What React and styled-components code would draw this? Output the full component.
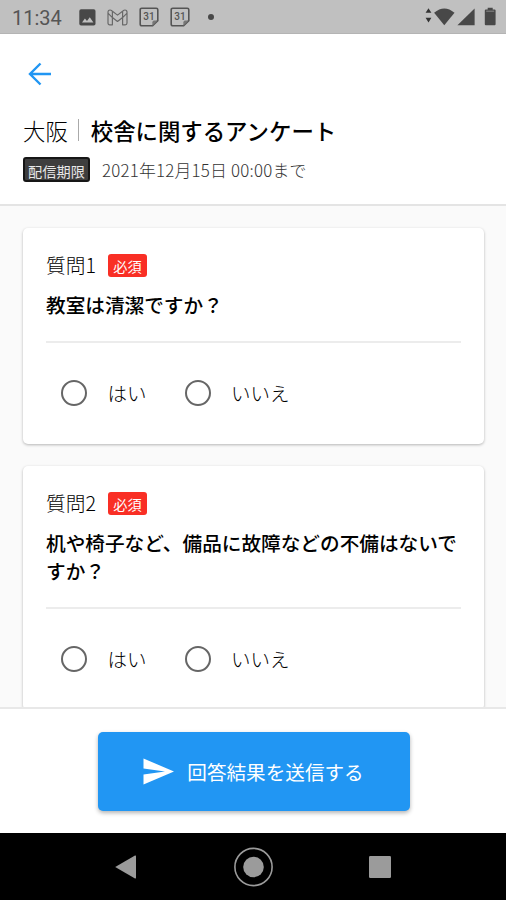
import styled, { createGlobalStyle } from "styled-components";

const questions = [
  { id: 1, title: "教室は清潔ですか？" },
  { id: 2, title: "机や椅子など、備品に故障などの不備はないですか？" },
];

function CalendarIcon() {
  return (
    <Icon width="20" height="20" viewBox="0 0 20 20">
      <path
        d="M2.8 1.2h14.4q1.6 0 1.6 1.6v10.8l-5.2 5.2H2.8q-1.6 0-1.6-1.6V2.8q0-1.6 1.6-1.6z"
        fill="none"
        stroke="#555"
        strokeWidth="1.6"
      />
      <path d="M13.4 18.8v-3.6q0-1.6 1.6-1.6h3.6z" fill="#777" />
      <text
        x="10"
        y="13"
        textAnchor="middle"
        fontFamily="Roboto, sans-serif"
        fontSize="10"
        fontWeight="500"
        fill="#555"
      >
        31
      </text>
    </Icon>
  );
}

function StatusBar() {
  return (
    <Status>
      <Clock>11:34</Clock>
      <Notifications>
        <Icon width="17" height="17" viewBox="0 0 17 17">
          <rect x="0.3" y="0.3" width="16.2" height="16.2" rx="1.8" fill="#484848" />
          <path d="M3 13.4l2.9-3.9 2.1 2.4 2.8-3.7 3.6 5.2z" fill="#c0c0c0" />
        </Icon>
        <Icon width="21" height="17" viewBox="0 0 21 17">
          <path
            d="M1 3.2Q1 1 3 1q1 0 1.8.7l5.7 4.4 5.7-4.4Q17 1 18 1q2 0 2 2.2V14q0 1.8-1.8 1.8h-2.6V8.6l-5.1 3.9-5.1-3.9v7.2H2.8Q1 15.8 1 14zM5.4 8.6V2.4M15.6 8.6V2.4M1.2 4.4l4.2 4.2M19.8 4.4l-4.2 4.2"
            fill="none"
            stroke="#686868"
            strokeWidth="1.2"
            strokeLinejoin="round"
          />
        </Icon>
        <CalendarIcon />
        <CalendarIcon />
        <Dot />
      </Notifications>
      <Icon width="71" height="20" viewBox="0 0 71 20">
        <path d="M3.5 1.2l2.9 4.5H.6zM3.5 15.6L.6 10.8h5.8z" fill="#333" />
        <path d="M9.1 5.8Q19.3-2.8 29.5 5.8L19.3 18.2z" fill="#484848" />
        <path d="M49.6 1.6V18.2H32.4z" fill="#484848" />
        <path
          d="M62.7 0.8h5v1.8h1.9q1 0 1 1V17.2q0 1-1 1h-8.8q-1 0-1-1V3.6q0-1 1-1h1.9z"
          fill="#484848"
        />
        <path d="M61.2 4.2h8" stroke="#999" strokeWidth=".8" />
      </Icon>
    </Status>
  );
}

function Question({ id, title }) {
  return (
    <Card>
      <CardTop>
        <Number>質問{id}</Number>
        <Required>必須</Required>
      </CardTop>
      <Title>{title}</Title>
      <Options>
        <Option>
          <Radio type="radio" name={`question${id}`} />
          はい
        </Option>
        <Option>
          <Radio type="radio" name={`question${id}`} />
          いいえ
        </Option>
      </Options>
    </Card>
  );
}

function App() {
  return (
    <Screen>
      <GlobalStyle />
      <StatusBar />
      <Header>
        <BackButton aria-label="戻る">
          <Icon width="24" height="24" viewBox="0 0 24 24">
            <path
              d="M12.5 1.5L2 12l10.5 10.5M2.3 12H23"
              fill="none"
              stroke="#2196f3"
              strokeWidth="2.4"
            />
          </Icon>
        </BackButton>
        <Heading>
          <Place>大阪</Place>
          <Separator />
          校舎に関するアンケート
        </Heading>
        <Deadline>
          <DeadlineLabel>配信期限</DeadlineLabel>
          2021年12月15日 00:00まで
        </Deadline>
      </Header>
      <List>
        {questions.map((question) => (
          <Question key={question.id} {...question} />
        ))}
      </List>
      <Footer>
        <SubmitButton>
          <Icon width="31" height="27" viewBox="0 0 31 27">
            <path d="M.5.5L31 13.5.5 26.5V16.4L22 13.5.5 10.6z" fill="#fff" />
          </Icon>
          回答結果を送信する
        </SubmitButton>
      </Footer>
      <NavBar>
        <Icon width="22" height="24" viewBox="0 0 22 24">
          <path d="M.2 12L20 .6q1-.4 1 .6v21.6q0 1-1 .6z" fill="#9b9b9b" />
        </Icon>
        <Icon width="40" height="40" viewBox="0 0 40 40">
          <circle cx="20.5" cy="20" r="18.6" fill="none" stroke="#9b9b9b" strokeWidth="1.6" />
          <circle cx="20.5" cy="20" r="10.3" fill="#9b9b9b" />
        </Icon>
        <Icon width="22" height="22" viewBox="0 0 22 22">
          <rect width="22" height="22" rx="1.2" fill="#9b9b9b" />
        </Icon>
      </NavBar>
    </Screen>
  );
}

export default App;

const GlobalStyle = createGlobalStyle`
  * {
    box-sizing: border-box;
  }

  body {
    margin: 0;
    font-family: "Noto Sans CJK JP", sans-serif;
    color: #000000;
  }
`;

const Screen = styled.div`
  display: flex;
  flex-direction: column;
  width: 506px;
  height: 900px;
  overflow: hidden;
  background: #ffffff;
`;

const Icon = styled.svg`
  display: block;
  flex-shrink: 0;
`;

const Status = styled.div`
  display: flex;
  align-items: center;
  height: 34px;
  flex-shrink: 0;
  padding: 1px 10px 0 12px;
  background: #c0c0c0;
  border-bottom: 1px solid #b4b4b4;
`;

const Clock = styled.span`
  width: 67px;
  padding-top: 1px;
  font-family: Roboto, sans-serif;
  font-size: 20px;
  line-height: 24px;
  color: #555555;
`;

const Notifications = styled.div`
  display: flex;
  align-items: center;
  gap: 11px;
  flex: 1;
`;

const Dot = styled.span`
  width: 6px;
  height: 6px;
  margin-left: 7px;
  border-radius: 50%;
  background: #484848;
`;

const Header = styled.header`
  height: 172px;
  flex-shrink: 0;
  padding: 28px 23px 0;
  border-bottom: 2px solid #e4e4e4;
`;

const BackButton = styled.button`
  display: block;
  margin-left: 5px;
  padding: 0;
  border: 0;
  background: none;
  cursor: pointer;
`;

const Heading = styled.h1`
  display: flex;
  align-items: center;
  margin: 27px 0 0;
  font-size: 22.4px;
  font-weight: 500;
  line-height: 34px;
`;

const Place = styled.span`
  font-weight: 300;
`;

const Separator = styled.span`
  width: 1px;
  height: 22px;
  margin: 0 12px 0 10px;
  background: #aaaaaa;
`;

const Deadline = styled.div`
  display: flex;
  align-items: center;
  gap: 12px;
  margin-top: 10px;
  font-size: 16.87px;
  font-weight: 300;
  line-height: 25px;
  letter-spacing: 0.22px;
  color: #333333;
`;

const DeadlineLabel = styled.span`
  width: 67px;
  height: 25px;
  border: 2px solid #161616;
  border-radius: 3px;
  background: #3e3e3e;
  color: #e8e8e8;
  font-size: 14.2px;
  font-weight: 400;
  line-height: 24px;
  letter-spacing: 0;
  text-align: center;
`;

const List = styled.main`
  display: flex;
  flex-direction: column;
  gap: 22px;
  flex: 1;
  min-height: 0;
  overflow: hidden;
  padding: 22px 22px 0 23px;
  background: #fafafa;
`;

const Card = styled.section`
  flex-shrink: 0;
  padding: 23px 23px 37px;
  border-radius: 5px;
  background: #ffffff;
  box-shadow: 0 1px 3px rgba(0, 0, 0, 0.28);
`;

const CardTop = styled.div`
  display: flex;
  align-items: center;
  height: 28px;
`;

const Number = styled.span`
  width: 62px;
  font-size: 19.7px;
  font-weight: 300;
  line-height: 28px;
`;

const Required = styled.span`
  width: 39px;
  height: 23px;
  border-radius: 3px;
  background: #f92f25;
  color: #ffffff;
  font-size: 14.2px;
  font-weight: 400;
  line-height: 25px;
  text-align: center;
`;

const Title = styled.h2`
  margin: 12px 0 0;
  padding-bottom: 22px;
  border-bottom: 2px solid #ececec;
  font-size: 19.65px;
  font-weight: 500;
  line-height: 28px;
`;

const Options = styled.div`
  display: flex;
  gap: 38px;
  margin-top: 36px;
  padding-left: 15px;
`;

const Option = styled.label`
  display: flex;
  align-items: center;
  height: 28px;
  font-size: 19.5px;
  font-weight: 300;
  line-height: 28px;
`;

const Radio = styled.input`
  appearance: none;
  width: 26px;
  height: 26px;
  margin: 0 20.5px 0 0;
  border: 2px solid #666666;
  border-radius: 50%;
  background: #ffffff;
`;

const Footer = styled.footer`
  display: flex;
  justify-content: center;
  height: 126px;
  flex-shrink: 0;
  padding: 23px 0 0 1px;
  border-top: 2px solid #e8e8e8;
`;

const SubmitButton = styled.button`
  display: flex;
  align-items: center;
  justify-content: center;
  gap: 13px;
  width: 312px;
  height: 79px;
  padding: 0;
  border: 0;
  border-radius: 5px;
  background: #2196f3;
  box-shadow: 0 2px 4px rgba(0, 0, 0, 0.3);
  color: #ffffff;
  font-family: inherit;
  font-size: 19.6px;
  font-weight: 400;
  line-height: 28px;
  cursor: pointer;
`;

const NavBar = styled.nav`
  display: flex;
  align-items: center;
  justify-content: space-between;
  height: 67px;
  flex-shrink: 0;
  padding: 0 115px;
  background: #000000;
`;
